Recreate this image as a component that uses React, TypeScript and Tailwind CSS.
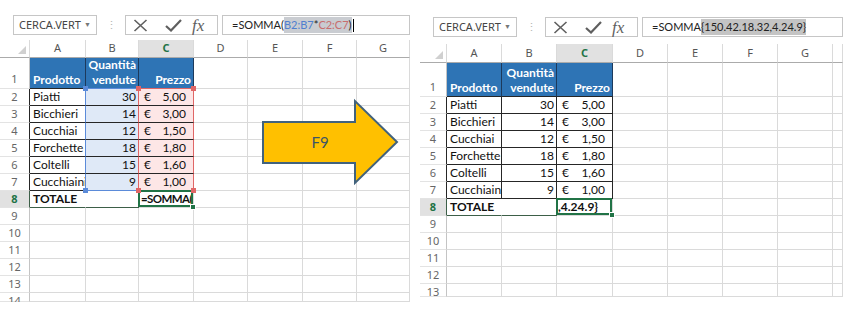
import React from "react";

type Side = "left" | "right";

const rows = [
  ["Piatti", "30", "5,00"],
  ["Bicchieri", "14", "3,00"],
  ["Cucchiai", "12", "1,50"],
  ["Forchette", "18", "1,80"],
  ["Coltelli", "15", "1,60"],
  ["Cucchiaini", "9", "1,00"],
];

const LETTERS = ["A", "B", "C", "D", "E", "F", "G", ""];

const layout = {
  left: {
    panel: "w-[410px] pt-[15px]",
    headGap: "mt-[5px] h-[18px]",
    row1H: "h-[31px]",
    rowHdr: "w-[30px]",
    cols: ["w-[56px]", "w-[53px]", "w-[55px]", "w-[54px]", "w-[55px]", "w-[54px]", "w-[53px]"],
    rowCount: 14,
    lastH: "h-[9px]",
  },
  right: {
    panel: "w-[423px] pt-[17px]",
    headGap: "mt-[7px] h-[19px]",
    row1H: "h-[34px]",
    rowHdr: "w-[27px]",
    cols: ["w-[55px]", "w-[55px]", "w-[56px]", "w-[55px]", "w-[55px]", "w-[55px]", "w-[55px]", "w-[10px]"],
    rowCount: 13,
    lastH: "h-[13px]",
  },
};

// border / fill per cell (r = excel row, c = column index)
function cellStyle(side: Side, r: number, c: number): string {
  const left = side === "left";
  const base = "border-r border-b";
  if (c > 2 || r > 8) return `${base} border-[#dadada]`;
  if (r === 1) {
    const bc = !left || c === 0 ? "border-b-[#262626]" : c === 1 ? "border-b-[#5b8bd9]" : "border-b-[#e06666]";
    return `${base} bg-[#2e74b5] text-white font-bold border-r-[#1d3a5c] ${bc}`;
  }
  if (r <= 7) {
    if (!left) return `${base} border-[#262626]`;
    if (c === 0) return `${base} border-r-[#5b8bd9] border-b-[#262626]`;
    if (c === 1) return `${base} bg-[#dfe9f7] border-r-[#e06666] ${r === 7 ? "border-b-[#5b8bd9]" : "border-b-[#262626]"}`;
    return `${base} bg-[#fde6e6] border-r-[#e06666] ${r === 7 ? "border-b-[#e06666]" : "border-b-[#262626]"}`;
  }
  if (c === 0) return `${base} border-r-white border-b-[#3d5f48]`;
  if (c === 1) return `${base} border-r-[#3d5f48] border-b-[#3d5f48]`;
  return `${base} border-[#dadada] relative`;
}

function rowHeaderStyle(r: number): string {
  if (r === 8) return "bg-[#e1e1e1] font-bold text-[#217346] border-r-[#3d5f48]";
  if (r >= 2 && r <= 7) return "text-[#666] border-r-[#262626]";
  return "text-[#666] border-r-[#c4c4c4]";
}

function XIcon() {
  return (
    <svg width="15" height="13" viewBox="0 0 15 13" fill="none" stroke="#5f5f5f" strokeWidth="1.6">
      <path d="M1.5 1 L13.5 12 M13.5 1 L1.5 12" />
    </svg>
  );
}

function CheckIcon() {
  return (
    <svg width="17" height="13" viewBox="0 0 17 13" fill="none" stroke="#5f5f5f" strokeWidth="2.2">
      <path d="M1 7 L6 11.5 L16 1" />
    </svg>
  );
}

function FormulaBar({ side }: { side: Side }) {
  return (
    <div className="flex h-[20px] pl-[13px]">
      <div className="flex w-[84px] shrink-0 items-center justify-between border border-[#c6c6c6] pl-[5px] pr-[5px] text-[11px] text-[#444] [font-family:'Noto_Sans',sans-serif]">
        <span>CERCA.VERT</span>
        <span className="text-[7px] text-[#777]">▼</span>
      </div>
      <div className="flex w-[28px] shrink-0 items-center justify-center text-[11px] text-[#b5b5b5]">⋮</div>
      <div className="flex w-[93px] shrink-0 items-center border border-[#c6c6c6] pl-[7px]">
        <XIcon />
        <span className="ml-[17px]">
          <CheckIcon />
        </span>
        <span className="ml-[10px] text-[17px] italic leading-none text-[#5f5f5f] [font-family:'Liberation_Serif',serif]">fx</span>
      </div>
      <div className="ml-[4px] flex min-w-0 flex-1 items-center overflow-hidden border border-[#c6c6c6] pl-[9px] text-[11px] whitespace-nowrap text-[#222]">
        {side === "left" ? (
          <>
            <span>=SOMMA(</span>
            <span className="bg-[#c9ccd1]">
              <span className="text-[#4f7fcf]">B2:B7</span>
              <span>*</span>
              <span className="text-[#c86e6e]">C2:C7</span>
              <span>)</span>
            </span>
            <span className="ml-px inline-block h-[13px] w-px bg-black" />
          </>
        ) : (
          <>
            <span>=SOMMA</span>
            <span className="bg-[#c4c4c4]">{"{150.42.18.32,4.24.9}"}</span>
          </>
        )}
      </div>
    </div>
  );
}

function Sheet({ side }: { side: Side }) {
  const L = layout[side];
  const left = side === "left";
  const rowNums = Array.from({ length: L.rowCount }, (_, i) => i + 1);

  const content = (r: number, c: number) => {
    if (r === 1) {
      if (c === 0) return <div className="flex h-full items-end pb-px pl-[3px] leading-[15px]">Prodotto</div>;
      if (c === 1)
        return (
          <div className="flex h-full flex-col items-end justify-end pb-px pr-[2px] leading-[15px]">
            <span>Quantità</span>
            <span>vendute</span>
          </div>
        );
      if (c === 2) return <div className="flex h-full items-end justify-end pb-px pr-[2px] leading-[15px]">Prezzo</div>;
      return null;
    }
    if (r >= 2 && r <= 7) {
      const d = rows[r - 2];
      if (c === 0) return <div className="overflow-hidden whitespace-nowrap pl-[3px]">{d[0]}</div>;
      if (c === 1) return <div className="pr-[2px] text-right">{d[1]}</div>;
      if (c === 2)
        return (
          <div className="flex justify-between pl-[5px] pr-[7px]">
            <span>€</span>
            <span>{d[2]}</span>
          </div>
        );
      return null;
    }
    if (r === 8) {
      if (c === 0) return <div className="pl-[3px] font-bold">TOTALE</div>;
      if (c === 2)
        return (
          <>
            <div className="flex items-center overflow-hidden whitespace-nowrap font-bold">
              {left ? (
                <>
                  <span className="pl-[2px] text-[11.5px] tracking-[-0.6px]">=SOMMA(</span>
                  <span className="ml-px inline-block h-[13px] w-[2px] shrink-0 bg-black" />
                </>
              ) : (
                <span className="pl-px">{",4.24.9}"}</span>
              )}
            </div>
            <div className="absolute -left-px -top-px right-0 bottom-0 border-2 border-[#217346]" />
            <div className="absolute -right-[3px] -bottom-[3px] h-[6px] w-[6px] border border-white bg-[#217346]" />
          </>
        );
    }
    return null;
  };

  return (
    <div className={`${L.panel} shrink-0`}>
      <FormulaBar side={side} />

      {/* column headers */}
      <div className={`flex ${L.headGap} text-[11px] [font-family:'Noto_Sans',sans-serif]`}>
        <div className={`${L.rowHdr} flex shrink-0 items-end justify-end border-r border-b border-r-[#dadada] border-b-[#ababab] pr-[3px] pb-[3px]`}>
          <svg width="8" height="8" viewBox="0 0 8 8">
            <polygon points="8,0 8,8 0,8" fill="#d0d0d0" />
          </svg>
        </div>
        {L.cols.map((w, c) => (
          <div
            key={c}
            className={`${w} flex shrink-0 items-center justify-center border-r border-b border-r-[#dadada] border-b-[#ababab] ${
              c === 2 ? "bg-[#e1e1e1] font-bold text-[#217346]" : "text-[#555]"
            }`}
          >
            {LETTERS[c]}
          </div>
        ))}
      </div>

      {/* grid body */}
      <div className="relative text-[12px] text-[#111]">
        {rowNums.map((r) => {
          const h = r === 1 ? L.row1H : r === L.rowCount ? L.lastH : "h-[17px]";
          return (
            <div key={r} className={`flex ${h} ${r === L.rowCount ? "overflow-hidden" : ""}`}>
              <div
                className={`${L.rowHdr} shrink-0 border-r border-b border-b-[#e3e3e3] text-center text-[11px] [font-family:'Noto_Sans',sans-serif] ${rowHeaderStyle(r)} ${
                  r === 1 ? "flex items-end justify-center pb-[2px] leading-[15px]" : "leading-[16px]"
                }`}
              >
                {r}
              </div>
              {L.cols.map((w, c) => (
                <div key={c} className={`${w} shrink-0 leading-[16px] ${cellStyle(side, r, c)}`}>
                  {content(r, c)}
                </div>
              ))}
            </div>
          );
        })}

        {left && (
          <>
            <div className="absolute left-[83px] top-[28px] h-[5px] w-[5px] bg-[#5b8bd9]" />
            <div className="absolute left-[136px] top-[28px] h-[5px] w-[5px] bg-[#e06666]" />
            <div className="absolute left-[191px] top-[28px] h-[5px] w-[5px] bg-[#e06666]" />
            <div className="absolute left-[83px] top-[130px] h-[5px] w-[5px] bg-[#5b8bd9]" />
            <div className="absolute left-[136px] top-[130px] h-[5px] w-[5px] bg-[#e06666]" />
            <div className="absolute left-[191px] top-[130px] h-[5px] w-[5px] bg-[#e06666]" />
          </>
        )}
      </div>
    </div>
  );
}

function F9Arrow() {
  return (
    <div className="absolute left-[258px] top-[96px] h-[92px] w-[144px]">
      <svg width="144" height="92" viewBox="0 0 144 92">
        <polygon
          points="5,26 97,26 97,5 139,46 97,87 97,67 5,67"
          fill="#ffc000"
          stroke="#41627d"
          strokeWidth="2"
          strokeLinejoin="miter"
        />
      </svg>
      <div className="absolute left-[5px] top-[26px] flex h-[41px] w-[114px] items-center justify-center text-[15px] text-[#3c5566]">
        F9
      </div>
    </div>
  );
}

export default function App() {
  return (
    <div className="relative flex h-[314px] w-[843px] overflow-hidden bg-white [font-family:Lato,sans-serif]">
      <Sheet side="left" />
      <div className="w-[10px] shrink-0" />
      <Sheet side="right" />
      <F9Arrow />
    </div>
  );
}
